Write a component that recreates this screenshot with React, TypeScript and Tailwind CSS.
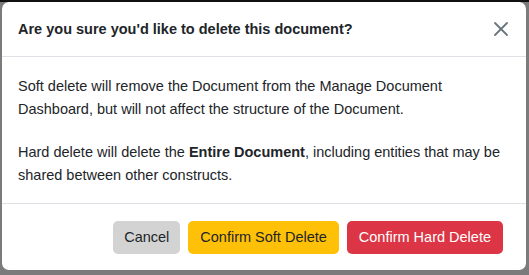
import { X } from "lucide-react";

const DeleteModal = () => {
  return (
    <div className="w-[524px] rounded-[7px] bg-white text-[#212529]">
      <div className="flex h-[55px] items-center justify-between border-b border-[#dee2e6] pl-[16px] pr-[13px]">
        <h5 className="text-[14.5px] font-bold leading-[22px]">
          Are you sure you'd like to delete this document?
        </h5>
        <X className="h-[24px] w-[24px] text-[#6c757d]" strokeWidth={1.8} />
      </div>
      <div className="border-b border-[#dee2e6] px-[16px] pt-[18px] pb-[17px] text-[14.5px] leading-[22.5px]">
        <p>
          Soft delete will remove the Document from the Manage Document
          Dashboard, but will not affect the structure of the Document.
        </p>
        <p className="mt-[21px]">
          Hard delete will delete the <b>Entire Document</b>, including
          entities that may be shared between other constructs.
        </p>
      </div>
      <div className="flex justify-end gap-[8px] pt-[17px] pb-[16px] pr-[23px] text-[14.5px]">
        <button className="h-[33px] rounded-[5px] bg-[#d3d3d3] px-[11px] text-[#212529]">
          Cancel
        </button>
        <button className="h-[33px] rounded-[5px] bg-[#ffc107] px-[12px] text-[#212529]">
          Confirm Soft Delete
        </button>
        <button className="h-[33px] rounded-[5px] bg-[#dc3545] px-[12px] text-white">
          Confirm Hard Delete
        </button>
      </div>
    </div>
  );
};

export default function App() {
  return (
    <div
      className="h-[275px] w-[529px] overflow-hidden border-t-2 border-[#111] bg-[#7b7b7b] pl-[2px]"
      style={{ fontFamily: '"Liberation Sans", Arial, sans-serif' }}
    >
      <DeleteModal />
    </div>
  );
}
